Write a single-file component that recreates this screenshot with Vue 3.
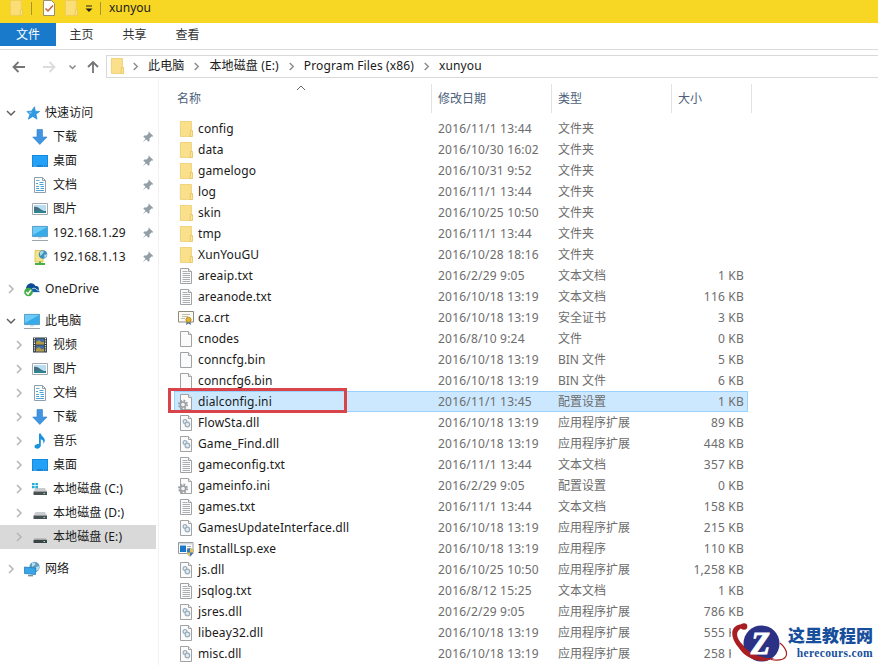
<template>
    <svg class="sprite" width="0" height="0">
        <symbol id="folder" viewBox="0 0 16 16">
            <path d="M2.400.4h11v15h-11z" fill="#fbe08c" stroke="#ecc968" stroke-width=".8"/>
            <path d="M12.500 9.500h2v6h-2.500z" fill="#fbe69c" stroke="#e6c25c" stroke-width=".8"/>
        </symbol>
        <symbol id="file" viewBox="0 0 16 16">
            <path d="M2.500.5h8l3 3v12h-11z" fill="#fbfbfb" stroke="#a0a3a5"/>
            <path d="M10.500.5v3h3" fill="#eee" stroke="#a0a3a5"/>
        </symbol>
        <symbol id="txt" viewBox="0 0 16 16">
            <use href="#file"/>
            <path d="M4.500 3.500h5M4.500 5.500h7.500M4.500 7.500h7.500M4.500 9.500h7.500M4.500 11.500h7.500M4.500 13.500h7.500" stroke="#a3a6a8" stroke-width=".9"/>
        </symbol>
        <symbol id="dll" viewBox="0 0 16 16">
            <use href="#file"/>
            <circle cx="7" cy="6.500" r="1.900" fill="#e6eef3" stroke="#9caebb" stroke-width="1.200"/>
            <circle cx="9.400" cy="9.500" r="2.300" fill="#dfeaf2" stroke="#9caebb" stroke-width="1.200"/>
        </symbol>
        <symbol id="ini" viewBox="0 0 16 16">
            <use href="#file"/>
            <circle cx="5" cy="10.500" r="4" fill="none" stroke="#9a9fa3" stroke-width="2" stroke-dasharray="1.700 1.440"/>
            <circle cx="5" cy="10.500" r="2.600" fill="#f4f4f4" stroke="#9a9fa3" stroke-width="1.500"/>
        </symbol>
        <symbol id="crt" viewBox="0 0 16 16">
            <path d="M.5 1.500h15v10.500H.5z" fill="#fdfbf3" stroke="#8e8a7c"/>
            <path d="M4 4.500h8M4 6.500h6M3 8.500h4" stroke="#b8b4a6" stroke-width=".9"/>
            <path d="M9 10l-1 5 2.500-1.500L13 15l-1-5z" fill="#4d6ea8"/>
            <circle cx="10.500" cy="9.800" r="2.600" fill="#e5b530" stroke="#a67d15" stroke-width=".8"/>
        </symbol>
        <symbol id="exe" viewBox="0 0 16 16">
            <path d="M.5 1.500h14.500v11H.5z" fill="#fff" stroke="#959ba0"/>
            <path d="M1 2h13.500v1.500H1z" fill="#d0d6da"/>
            <path d="M2 4.500h6v6.500H2z" fill="#1976c8"/>
            <path d="M9 5.500h4M9 7.500h3" stroke="#9aa6ae"/>
            <path d="M8.800 8.500L12 7l3.300 1.500c0 4-1 5.500-3.300 7-2.300-1.500-3.200-3-3.200-7z" fill="#3c79b5"/>
            <path d="M12 7l3.300 1.500c0 1 0 2-.3 3H12zM9 11.500h3v4c-1.700-1-2.600-2.200-3-4z" fill="#e6c35a"/>
        </symbol>
        <symbol id="star" viewBox="0 0 16 16">
            <path d="M10.500 1.700l.8 4.500 4.400.3-3.700 2.700 1 5-4.200-2.800-4.500 2.800 1.500-4.600-2.900-3.200 4.400-.2z" fill="#2e9be5" stroke="#1b7fc9" stroke-width=".6"/>
            <path d="M9.700 3.700L7.700 7l-3.400.3 2.400 1.800z" fill="#7cc7f6"/>
        </symbol>
        <symbol id="down" viewBox="0 0 16 16">
            <path d="M5 .5h5.500v7.500H15l-7.200 7.500L.7 8H5z" fill="#3f95e2" stroke="#2f80c8" stroke-width=".6"/>
        </symbol>
        <symbol id="desktop" viewBox="0 0 16 16">
            <path d="M0 2h16v12H0z" fill="#1585d8"/>
            <path d="M.8 2.800h14.400v9.200H.8z" fill="#23a1f7"/>
            <path d="M1.500 13h3M11 13h1M13.500 13h1" stroke="#9bd2fa" stroke-width=".8"/>
        </symbol>
        <symbol id="doc" viewBox="0 0 16 16">
            <path d="M2.500.5h8l3 3v12h-11z" fill="#fff" stroke="#8da0ad"/>
            <path d="M10.500.5v3h3" fill="none" stroke="#8da0ad"/>
            <path d="M4 6.500h2M7.500 5.500h4M7.500 7.500h4M4 9.500h3M8.500 9.500H12M4 11.500h3M8.500 11.500H12M4 13.500h8" stroke="#4ba3d6"/>
            <path d="M4 3.500h3.500" stroke="#6caed4"/>
        </symbol>
        <symbol id="pic" viewBox="0 0 16 16">
            <path d="M.5 2.500h15v11H.5z" fill="#fff" stroke="#a0a9af"/>
            <path d="M2 4h12v8H2z" fill="#b9def3"/>
            <path d="M2 6c3-1 5 1 7 2.500s3 1.500 5 1.500v2H2z" fill="#466d80"/>
            <path d="M2 9.500c5-.5 7 0 12 1.500v1H2z" fill="#2d8593"/>
        </symbol>
        <symbol id="monitor" viewBox="0 0 16 16">
            <path d="M.4 1.400h15.200v10.200H.4z" fill="#37abea" stroke="#4b93bd" stroke-width=".8"/>
            <path d="M1 2h14L1 10z" fill="#6ccaf6"/>
            <path d="M6 12h4v1.500H6z" fill="#cfdce4"/>
            <path d="M0 15.500h16" stroke="#9ca6ac"/>
        </symbol>
        <symbol id="server" viewBox="0 0 16 16">
            <path d="M3 1.500h8v11.500H3z" fill="#f7e387" stroke="#d9bd49" stroke-width=".8"/>
            <circle cx="11" cy="5.500" r="4.300" fill="#3d8fbd"/>
            <path d="M8 3c2-1.500 3-1 4 0L10 5.500 8 7zM12 6l3-1c0 2-1 3.500-2.500 4z" fill="#a9d8e6"/>
            <path d="M3 15h10M8 12.500V15" stroke="#49ae43" stroke-width="2"/>
        </symbol>
        <symbol id="cloud" viewBox="0 0 16 16">
            <path d="M2 8c0-6 7-8 9.500-3 3-.5 3.500 2 3.500 4v2H2z" fill="#0d4c93"/>
            <path d="M6.500 11.500c-1-4 5-6 6.500-2.500 2.200 0 3 1 3 2.500z" fill="#145fb0" stroke="#fff" stroke-width=".7"/>
            <circle cx="4.500" cy="11" r="4.300" fill="#42ae43"/>
            <path d="M2.200 11L4 13l3-4" fill="none" stroke="#fff" stroke-width="1.500"/>
        </symbol>
        <symbol id="video" viewBox="0 0 16 16">
            <path d="M1 .5h14v15H1z" fill="#303840"/>
            <path d="M4 1.500h8v6H4zM4 8.500h8v6H4z" fill="#416ca3"/>
            <path d="M4 5l3-2 3 2.500 2-1v3H4zM4 12l3-2 3 2.500 2-1v3H4z" fill="#b49a44"/>
            <path d="M2.500 1v14M13.500 1v14" stroke="#e5e9ec" stroke-width="1.300" stroke-dasharray="1.300 1"/>
        </symbol>
        <symbol id="music" viewBox="0 0 16 16">
            <path d="M7 .5h1.800c.5 3 4.500 4 4 7.500-.2 1.300-.8 2-1.500 2.700.6-2.500-.3-3.700-2.500-4.500v6.300c0 2-1.800 3.200-3.600 3.200-1.600 0-2.700-.9-2.700-2.200 0-1.700 2.200-2.900 4.500-2.500z" fill="#1a93dc"/>
        </symbol>
        <symbol id="drive" viewBox="0 0 16 16">
            <path d="M3.500 7h9.500l2 3.500H1.500z" fill="#c9cccd"/>
            <path d="M1.500 10.500H15V14H1.500z" fill="#4a5154"/>
            <path d="M11.500 12.500h1.500" stroke="#7fe3a0"/>
        </symbol>
        <symbol id="windrive" viewBox="0 0 16 16">
            <use href="#drive"/>
            <path d="M0 2h2.600v2.200H0zM3.400 2H6v2.200H3.400zM0 5h2.600v2.200H0zM3.400 5H6v2.200H3.400z" fill="#21add5"/>
        </symbol>
        <symbol id="flatdrive" viewBox="0 0 16 16">
            <path d="M2.500 9.500h11.500l1 1.500H1.500z" fill="#9fa3a4"/>
            <path d="M1.500 11H15v3H1.500z" fill="#3c4346"/>
            <path d="M11.500 12.500h1.500" stroke="#7fe3a0"/>
        </symbol>
        <symbol id="network" viewBox="0 0 16 16">
            <circle cx="10.500" cy="6" r="5.200" fill="#5d9fc4"/>
            <path d="M8 1.500c3-.5 4 1 3 2.500L8 6zM12 6l3.500-1-1 4-2 1z" fill="#b9dcea"/>
            <path d="M.5 6l11 1v6.500l-11-1z" fill="#36a6e8" stroke="#2a7cb6" stroke-width=".8"/>
            <path d="M4 14.700h5" stroke="#6d8797" stroke-width="1.300"/>
        </symbol>
        <symbol id="pin" viewBox="0 0 12 12">
            <path d="M7 .8L11.200 5l-1 .8-.8-.2-2 2.200.2 2.200-1 .8L4.200 8.500.8 11.200 3.500 7.700 1.300 5.500l.8-1 2.300.1 2.200-2L6.300 1.500z" fill="#939fa7"/>
        </symbol>
        <symbol id="chev" viewBox="0 0 10 10">
            <path d="M3 1l4 4-4 4" fill="none" stroke="currentColor" stroke-width="1.500"/>
        </symbol>
    </svg>

    <div class="window">
        <header class="titlebar">
            <svg class="icon faded"><use href="#folder"/></svg>
            <i class="bar first"></i>
            <svg class="icon check" viewBox="0 0 16 16">
                <path d="M2.500.5h8l3 3v12h-11z" fill="#fff" stroke="#9a8f6c"/>
                <path d="M4.500 8.500l2.500 2.500 5-5.500" fill="none" stroke="#c8603a" stroke-width="1.500"/>
            </svg>
            <svg class="icon faded second"><use href="#folder"/></svg>
            <svg class="drop" viewBox="0 0 8 8"><path d="M1 1h6" stroke="#222"/><path d="M.5 3.500h7L4 7z" fill="#222"/></svg>
            <i class="bar"></i>
            <span>xunyou</span>
        </header>

        <nav class="tabs">
            <a class="active">文件</a>
            <a>主页</a>
            <a>共享</a>
            <a>查看</a>
        </nav>

        <div class="address">
            <svg class="arrows" viewBox="0 0 106 24">
                <g fill="none" stroke-width="1.800">
                    <path d="M25 12H14M18.500 7l-5 5 5 5" stroke="#757575"/>
                    <path d="M43 12h11M49.500 7l5 5-5 5" stroke="#dcdcdc"/>
                    <path d="M69.500 10.500l3 3 3-3" stroke="#888" stroke-width="1.500"/>
                    <path d="M93 18V7M88 12l5-5 5 5" stroke="#757575"/>
                </g>
            </svg>
            <div class="path">
                <svg class="icon"><use href="#folder"/></svg>
                <template v-for="part in path" :key="part">
                    <svg class="sep"><use href="#chev"/></svg>
                    <span>{{ part }}</span>
                </template>
            </div>
        </div>

        <div class="body">
            <aside>
                <div
                    v-for="(item, i) in tree"
                    :key="i"
                    class="item"
                    :class="{ child: item.child, gap: item.gap, current: item.current }"
                >
                    <svg v-if="item.arrow" class="chevron" :class="item.arrow"><use href="#chev"/></svg>
                    <i v-else class="chevron"></i>
                    <svg class="icon"><use :href="'#' + item.icon"/></svg>
                    <span>{{ item.name }}</span>
                    <svg v-if="item.pin" class="pin"><use href="#pin"/></svg>
                </div>
            </aside>

            <main>
                <div class="head">
                    <span>名称</span>
                    <span>修改日期</span>
                    <span>类型</span>
                    <span>大小</span>
                    <svg class="sort" viewBox="0 0 10 6"><path d="M1 5l4-4 4 4" fill="none" stroke="#666"/></svg>
                </div>
                <div v-for="f in files" :key="f[1]" class="row" :class="{ selected: f[1] === selected }" @click="selected = f[1]">
                    <div class="name">
                        <svg class="icon"><use :href="'#' + f[0]"/></svg>
                        <span>{{ f[1] }}</span>
                    </div>
                    <span class="date">{{ f[2] }}</span>
                    <span class="type">{{ f[3] }}</span>
                    <span class="size">{{ f[4] }}</span>
                    <i v-if="f[1] === 'dialconfig.ini'" class="mark"></i>
                </div>
            </main>
        </div>

        <div class="logo">
            <svg viewBox="0 0 58 42">
                <path d="M13 3C-3 3-2 19 12 31c8 8 22 11 32 6-14 2-23-3-30-11C4 17 3 9 14 6z" fill="#a81e22"/>
                <circle cx="13" cy="5.500" r="3.300" fill="#a81e22"/>
                <circle cx="30.500" cy="22.500" r="18" fill="#2b3185"/>
                <path d="M5 15c6 13 22 23 37 22-10 6-22 2-30-5C7 27 5 20 5 15z" fill="#a81e22"/>
                <path d="M49 22c7 6 9 13 3 16-4 1.500-8 1.500-12 .5" fill="none" stroke="#a81e22" stroke-width="1.200"/>
                <text x="20" y="33" class="z">Z</text>
            </svg>
            <div class="words">
                <b>这里教程网</b>
                <em>herecours.com</em>
            </div>
        </div>
    </div>
</template>

<script setup>
    import { ref } from 'vue';

    const selected = ref('dialconfig.ini')

    const path = ['此电脑', '本地磁盘 (E:)', 'Program Files (x86)', 'xunyou']

    const tree = [
        { name: '快速访问', icon: 'star', arrow: 'open' },
        { name: '下载', icon: 'down', child: true, pin: true },
        { name: '桌面', icon: 'desktop', child: true, pin: true },
        { name: '文档', icon: 'doc', child: true, pin: true },
        { name: '图片', icon: 'pic', child: true, pin: true },
        { name: '192.168.1.29', icon: 'monitor', child: true, pin: true },
        { name: '192.168.1.13', icon: 'server', child: true, pin: true },
        { name: 'OneDrive', icon: 'cloud', arrow: 'closed', gap: true },
        { name: '此电脑', icon: 'monitor', arrow: 'open', gap: true },
        { name: '视频', icon: 'video', arrow: 'closed', child: true },
        { name: '图片', icon: 'pic', arrow: 'closed', child: true },
        { name: '文档', icon: 'doc', arrow: 'closed', child: true },
        { name: '下载', icon: 'down', arrow: 'closed', child: true },
        { name: '音乐', icon: 'music', arrow: 'closed', child: true },
        { name: '桌面', icon: 'desktop', arrow: 'closed', child: true },
        { name: '本地磁盘 (C:)', icon: 'windrive', arrow: 'closed', child: true },
        { name: '本地磁盘 (D:)', icon: 'drive', arrow: 'closed', child: true },
        { name: '本地磁盘 (E:)', icon: 'flatdrive', arrow: 'closed', child: true, current: true },
        { name: '网络', icon: 'network', arrow: 'closed', gap: true },
    ]

    const files = [
        ['folder', 'config', '2016/11/1 13:44', '文件夹', ''],
        ['folder', 'data', '2016/10/30 16:02', '文件夹', ''],
        ['folder', 'gamelogo', '2016/10/31 9:52', '文件夹', ''],
        ['folder', 'log', '2016/11/1 13:44', '文件夹', ''],
        ['folder', 'skin', '2016/10/25 10:50', '文件夹', ''],
        ['folder', 'tmp', '2016/11/1 13:44', '文件夹', ''],
        ['folder', 'XunYouGU', '2016/10/28 18:16', '文件夹', ''],
        ['txt', 'areaip.txt', '2016/2/29 9:05', '文本文档', '1 KB'],
        ['txt', 'areanode.txt', '2016/10/18 13:19', '文本文档', '116 KB'],
        ['crt', 'ca.crt', '2016/10/18 13:19', '安全证书', '3 KB'],
        ['file', 'cnodes', '2016/8/10 9:24', '文件', '0 KB'],
        ['file', 'conncfg.bin', '2016/10/18 13:19', 'BIN 文件', '5 KB'],
        ['file', 'conncfg6.bin', '2016/10/18 13:19', 'BIN 文件', '6 KB'],
        ['ini', 'dialconfig.ini', '2016/11/1 13:45', '配置设置', '1 KB'],
        ['dll', 'FlowSta.dll', '2016/10/18 13:19', '应用程序扩展', '89 KB'],
        ['dll', 'Game_Find.dll', '2016/10/18 13:19', '应用程序扩展', '448 KB'],
        ['txt', 'gameconfig.txt', '2016/11/1 13:44', '文本文档', '357 KB'],
        ['ini', 'gameinfo.ini', '2016/2/29 9:05', '配置设置', '0 KB'],
        ['txt', 'games.txt', '2016/11/1 13:44', '文本文档', '158 KB'],
        ['dll', 'GamesUpdateInterface.dll', '2016/10/18 13:19', '应用程序扩展', '215 KB'],
        ['exe', 'InstallLsp.exe', '2016/10/18 13:19', '应用程序', '110 KB'],
        ['dll', 'js.dll', '2016/10/25 10:50', '应用程序扩展', '1,258 KB'],
        ['txt', 'jsqlog.txt', '2016/8/12 15:25', '文本文档', '1 KB'],
        ['dll', 'jsres.dll', '2016/2/29 9:05', '应用程序扩展', '786 KB'],
        ['dll', 'libeay32.dll', '2016/10/18 13:19', '应用程序扩展', '555 KB'],
        ['dll', 'misc.dll', '2016/10/18 13:19', '应用程序扩展', '258 KB'],
    ]
</script>

<style>
    body {
        background-color: white;
        overflow: hidden;
    }
</style>

<style scoped>
    .sprite {
        position: absolute;
    }

    .window {
        position: relative;
        width: 878px;
        height: 665px;
        overflow: hidden;
        background-color: white;
        color: #1a1a1a;
        font: 12px/20px "Noto Sans", "Noto Sans CJK SC", sans-serif;
        white-space: nowrap;
    }

    svg {
        flex: none;
        display: block;
    }

    .icon {
        width: 16px;
        height: 16px;
    }

    .titlebar {
        display: flex;
        align-items: center;
        height: 23px;
        padding: 0 0 7px 8px;
        box-sizing: border-box;
        background-color: #f8d624;

        .faded {
            opacity: 0.8;
        }

        .bar {
            width: 1px;
            height: 13px;
            background-color: #a8923a;
        }

        .first {
            margin: 0 9px 0 7px;
        }

        .second {
            margin-left: 6px;
        }

        .drop {
            width: 8px;
            height: 8px;
            margin: 2px 7px 0 6px;
        }

        .bar + span {
            margin-left: 8px;
        }
    }

    .tabs {
        display: flex;
        height: 26px;
        border-bottom: 1px solid #dadbdc;

        > a {
            width: 53px;
            height: 23px;
            line-height: 24px;
            text-align: center;
            color: #333;
        }

        > .active {
            width: 56px;
            margin-right: -1px;
            background-color: #1979ca;
            color: white;
        }
    }

    .address {
        display: flex;
        height: 23px;
        padding-top: 5px;
    }

    .arrows {
        width: 106px;
        height: 24px;
    }

    .path {
        display: flex;
        align-items: center;
        flex: 1;
        height: 23px;
        box-sizing: border-box;
        border: 1px solid #d9d9d9;
        border-right: none;
        padding: 0 0 2px 2px;

        .sep {
            width: 9px;
            height: 9px;
            margin: 1px 8px 0 8px;
            color: #888;
        }

        .icon + .sep {
            margin: 1px 8px 0 6px;
        }

        > span {
            letter-spacing: 0.13px;
        }
    }

    .body {
        display: flex;
    }

    aside {
        width: 158px;
        height: 587px;
        padding-top: 23px;
        border-right: 1px solid #f3f3f3;
    }

    .item {
        display: flex;
        align-items: center;
        width: 156px;
        height: 24px;
        padding-left: 6px;
        box-sizing: border-box;

        > .icon {
            margin: 0 5px 0 8px;
        }

        > span {
            flex: 1;
            letter-spacing: 0.1px;
        }
    }

    .item .chevron {
        width: 10px;
        height: 10px;
        color: #b5b5b5;
    }

    .item .open {
        color: #606060;
        transform: rotate(90deg);
    }

    .child {
        padding-left: 14px;
    }

    .gap {
        margin-top: 8px;
    }

    .current {
        background-color: #d9d9d9;
    }

    .pin {
        width: 12px;
        height: 12px;
        margin-right: 2px;
    }

    main {
        padding: 6px 0 0 15px;
    }

    .head {
        position: relative;
        display: grid;
        grid-template-columns: 258px 120px 120px 80px;
        height: 28px;
        margin-bottom: 6px;
        line-height: 29px;
        color: #4c607a;

        > span {
            border-right: 1px solid #e3e3e3;
            padding-left: 6px;
        }

        > span:first-child {
            padding-left: 3px;
        }
    }

    .sort {
        position: absolute;
        left: 122px;
        top: 1px;
        width: 10px;
        height: 6px;
    }

    .row {
        position: relative;
        display: grid;
        grid-template-columns: 263px 120px 86px 100px;
        align-items: center;
        width: 574px;
        height: 21px;
        box-sizing: border-box;
        border: 1px solid transparent;
        color: #6d6d6d;
    }

    .name {
        display: flex;
        align-items: center;
        gap: 4px;
        padding-left: 3px;
        color: #1a1a1a;
        letter-spacing: 0.12px;
    }

    .date {
        letter-spacing: 0.2px;
    }

    .size {
        text-align: right;
        letter-spacing: 0.2px;
    }

    .selected {
        background-color: #cce8ff;
        border-color: #99d1ff;
    }

    /* red frame round the file to edit */
    .mark {
        position: absolute;
        left: -7px;
        top: -4px;
        width: 179px;
        height: 25px;
        box-sizing: border-box;
        border: 3px solid #d9434a;
    }

    .logo {
        position: absolute;
        left: 731px;
        top: 621px;
        display: flex;
        width: 147px;
        height: 44px;
        background-color: white;

        > svg {
            width: 58px;
            height: 42px;
        }

        .z {
            font: italic bold 31px "Liberation Serif", serif;
            fill: white;
            stroke: white;
        }
    }

    .words {
        display: flex;
        flex-direction: column;
        align-items: flex-end;
        width: 84px;

        b {
            font: 900 17px/27px "Noto Sans CJK SC", sans-serif;
            color: #174f9c;
        }

        em {
            font: bold 11.5px/11px "Liberation Serif", serif;
            letter-spacing: 0.35px;
            color: #174f9c;
        }
    }
</style>
